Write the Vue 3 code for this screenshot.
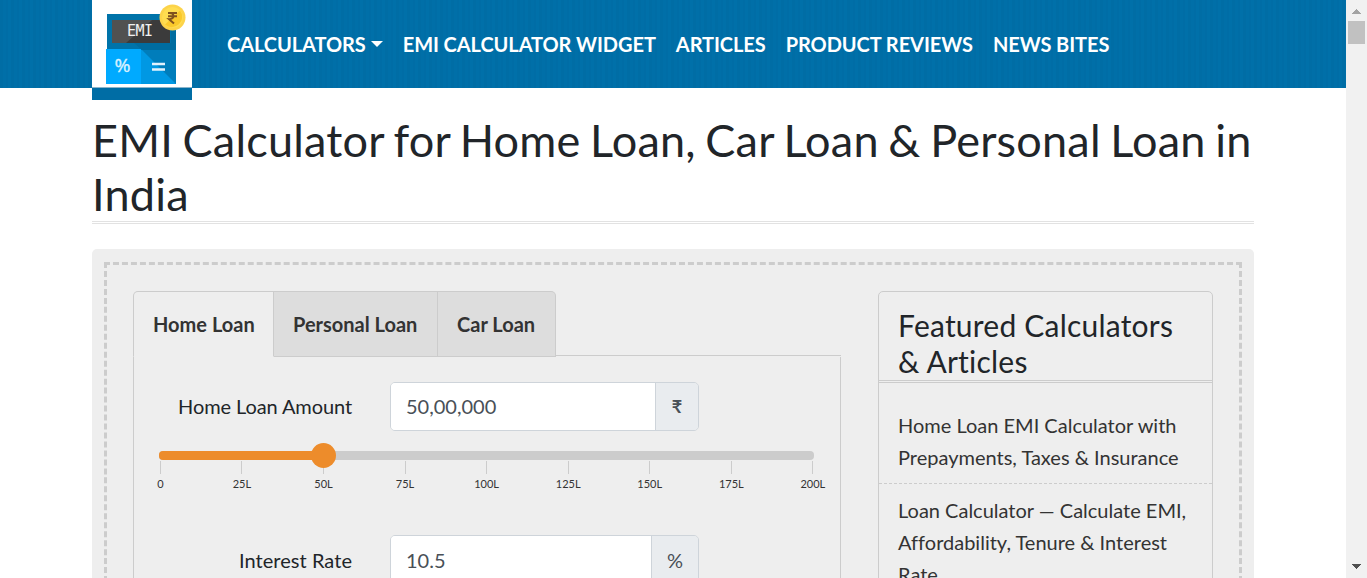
<script setup>
const nav = ['CALCULATORS', 'EMI CALCULATOR WIDGET', 'ARTICLES', 'PRODUCT REVIEWS', 'NEWS BITES']
const tabs = ['Home Loan', 'Personal Loan', 'Car Loan']
const ticks = ['0', '25L', '50L', '75L', '100L', '125L', '150L', '175L', '200L']
const value = 25
</script>

<template>
  <div class="window">
    <div class="page">
      <header class="bar">
        <a class="logo">
          <svg width="100" height="88" viewBox="0 0 100 88">
            <rect width="100" height="87" fill="#fff" />
            <rect y="87" width="100" height="1" fill="#8ab4cb" />
            <rect x="15" y="14" width="69" height="36" fill="#0073a9" />
            <path d="M79 14h5v36H50l-8-7h37z" fill="#006c9f" />
            <rect x="20" y="20" width="58" height="23" fill="#515151" />
            <path d="M60 20h18v23H34z" fill="#3b3b3b" />
            <rect x="14" y="49" width="35" height="35" fill="#00aaff" />
            <rect x="49" y="50" width="35" height="34" fill="#0098e3" />
            <path d="M50 50h34v34z" fill="#007dbb" />
            <text x="35" y="36" class="emi" textLength="26">EMI</text>
            <text x="22.500" y="72" class="pct" textLength="16" lengthAdjust="spacingAndGlyphs">%</text>
            <path d="M60 64h13M60 69.500h13" stroke="#e2f2fd" stroke-width="2.600" />
            <circle cx="80.500" cy="17.500" r="13" fill="#fcd34a" />
            <circle cx="80.500" cy="17.500" r="10.500" fill="#ffdd50" />
            <path d="M88 10.500a10.300 10.300 0 0 1-15 14z" fill="#fac92c" />
            <path d="M76 13h9M76 16.300h9M77 13c6-.5 6 6.500 0 6.200l5 4.300" fill="none" stroke="#80521f" stroke-width="2" />
          </svg>
        </a>
        <nav>
          <a v-for="(n, i) in nav" :key="n">{{ n }}<i v-if="i === 0" class="caret"></i></a>
        </nav>
      </header>
      <main>
        <h1>EMI Calculator for Home Loan, Car Loan &amp; Personal Loan in India</h1>
        <div class="panel">
          <div class="dashed">
            <section class="calc">
              <div class="tabs">
                <div v-for="(t, i) in tabs" :key="t" class="tab" :class="{ active: i === 0 }">{{ t }}</div>
                <div class="rest"></div>
              </div>
              <div class="form">
                <div class="row">
                  <label>Home Loan Amount</label>
                  <div class="group">
                    <div class="value">50,00,000</div>
                    <div class="addon rupee">₹</div>
                  </div>
                </div>
                <div class="slider">
                  <div class="fill" :style="{ width: value + '%' }"></div>
                  <div class="knob" :style="{ left: value + '%' }"></div>
                </div>
                <div class="ticks">
                  <div v-for="t in ticks" :key="t" class="tick"><i></i><span>{{ t }}</span></div>
                </div>
                <div class="row second">
                  <label>Interest Rate</label>
                  <div class="group">
                    <div class="value">10.5</div>
                    <div class="addon percent">%</div>
                  </div>
                </div>
              </div>
            </section>
            <aside>
              <h3>Featured Calculators &amp; Articles</h3>
              <ul>
                <li>Home Loan EMI Calculator with Prepayments, Taxes &amp; Insurance</li>
                <li>Loan Calculator — Calculate EMI, Affordability, Tenure &amp; Interest Rate</li>
              </ul>
            </aside>
          </div>
        </div>
      </main>
    </div>
    <div class="scroll">
      <svg width="21" height="578" viewBox="0 0 21 578" shape-rendering="crispEdges">
        <path d="M6 14l4.500-5 4.500 5z" fill="#a3a3a3" />
        <rect x="2" y="21" width="17" height="23" fill="#c1c1c1" />
        <path d="M6 564h9l-4.500 5z" fill="#505050" />
      </svg>
    </div>
  </div>
</template>

<style>
body { margin: 0; overflow: hidden; }
</style>

<style scoped>
* { box-sizing: border-box; }
.window {
  display: flex;
  width: 1367px;
  height: 578px;
  overflow: hidden;
  background: #fff;
  color: #212529;
  font: 400 20px/32px Lato, sans-serif;
  font-variant-ligatures: none;
}
.page { width: 1346px; height: 578px; overflow: hidden; }
.scroll { width: 21px; background: #f1f1f1; }
.scroll svg { display: block; }
.bar {
  display: flex;
  height: 88px;
  padding-left: 92px;
  background: repeating-linear-gradient(90deg, #006da5 0 3px, #006fa8 3px 6px, #006da6 6px 8px, #0070a9 8px 11px);
}
.logo { width: 100px; height: 100px; background: #006da5; flex: none; }
.logo svg { display: block; }
.emi { font: 15px "DejaVu Sans Mono", monospace; fill: #f0f0f0; }
.pct { font: 18px "Noto Sans", sans-serif; fill: #d8f1ff; stroke: #d8f1ff; stroke-width: 0.3; }
nav { display: flex; gap: 20px; padding: 28px 0 0 35px; letter-spacing: -0.07px; }
nav a { color: #fff; font-weight: 700; white-space: nowrap; }
.caret {
  display: inline-block;
  margin-left: 5px;
  vertical-align: 5px;
  border: 6px solid transparent;
  border-top-color: #fff;
  border-bottom: 0;
}
main { width: 1162px; margin-left: 92px; padding-top: 25px; }
h1 {
  height: 111px;
  margin: 0 0 25px;
  font-size: 45px;
  font-weight: 400;
  line-height: 54px;
  letter-spacing: 0.2px;
  word-spacing: -2.1px;
  border-bottom: 3px double #e2e2e2;
}
.panel { height: 700px; padding: 13px 12px; background: #eee; border-radius: 5px; }
.dashed {
  display: flex;
  align-items: flex-start;
  justify-content: space-between;
  height: 670px;
  padding: 26px;
  border: 3px dashed #ccc;
}
.calc { width: 708px; }
.tabs { display: flex; }
.tab {
  height: 66px;
  padding-left: 19px;
  line-height: 64px;
  width: 164px;
  font-weight: 700;
  color: #333;
  background: #ddd;
  border: 1px solid #ccc;
  border-left: 0;
}
.tab.active { width: 141px; background: #eee; border-left: 1px solid #ccc; border-bottom-color: #eee; border-top-left-radius: 5px; }
.tab:nth-child(3) { width: 118px; border-top-right-radius: 5px; }
.rest { flex: 1; height: 65px; border-bottom: 1px solid #ccc; }
.form { height: 500px; padding: 25px 25px 0; border: solid #ccc; border-width: 0 1px; }
.row { display: flex; height: 49px; }
label { width: 193px; margin-right: 38px; text-align: right; line-height: 49px; letter-spacing: -0.1px; }
.group {
  display: flex;
  width: 309px;
  height: 49px;
  overflow: hidden;
  border: 1px solid #ced4da;
  border-radius: 5px;
  line-height: 47px;
  color: #495057;
}
.value { flex: 1; padding-left: 15px; background: #fff; }
.addon { border-left: 1px solid #ced4da; background: #e9ecef; text-align: center; }
.rupee { width: 43px; font-weight: 700; font-size: 18px; }
.percent { width: 47px; }
.slider { position: relative; height: 9px; margin: 20px 0 0; width: 655px; background: #ccc; border-radius: 4px; }
.fill { height: 9px; background: #ed8c2b; border-radius: 4px; }
.knob { position: absolute; top: -8px; width: 25px; height: 25px; margin-left: -12px; border-radius: 50%; background: #ed8c2b; }
.ticks { display: flex; width: 734px; margin: 1px 0 0 -39.4px; }
.tick { display: flex; flex-direction: column; align-items: center; flex: 1; font-size: 11px; line-height: 20px; color: #333; }
.tick i { width: 1px; height: 13px; background: #ccc; }
.second { margin-top: 41px; }
.second label { line-height: 51px; letter-spacing: 0.05px; }
.second .group { line-height: 49px; }
aside { width: 335px; height: 600px; border: 1px solid #ccc; border-radius: 5px 5px 0 0; }
h3 { height: 91px; margin: 0; padding: 15px 15px 0 19px; font-size: 30px; font-weight: 400; line-height: 36px; letter-spacing: 0.22px; border-bottom: 3px double #ccc; }
ul { list-style: none; margin: 0; padding: 17px 0 0; }
li { padding: 9px 19px 10px; color: #333; border-bottom: 1px dashed #ccc; }
li + li { padding-top: 10px; }
</style>
